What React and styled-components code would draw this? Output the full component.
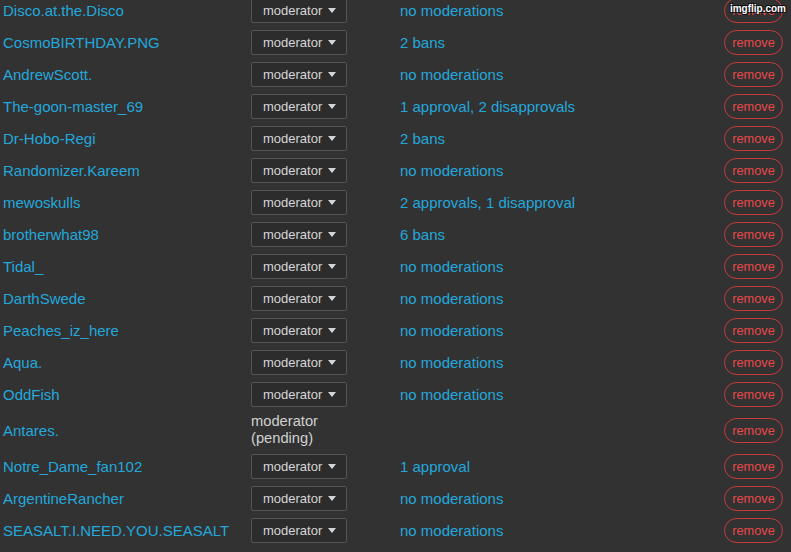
import React from "react";
import styled, { createGlobalStyle } from "styled-components";

const GlobalStyle = createGlobalStyle`
	html, body {
		margin: 0;
		padding: 0;
		background: #323232;
		overflow: hidden;
	}
	body {
		font-family: "Liberation Sans", Arial, sans-serif;
	}
`;

const Page = styled.div`
	position: relative;
	width: 791px;
	height: 552px;
	overflow: hidden;
	background: #323232;
`;

const Table = styled.div`
	margin-top: -6px;
	display: flex;
	flex-direction: column;
`;

const Row = styled.div`
	display: grid;
	grid-template-columns: 251px 149px 1fr 67px;
	align-items: center;
	height: ${(props) => (props.tall ? "40px" : "32px")};
`;

const Name = styled.a`
	padding-left: 3px;
	padding-top: 1px;
	font-size: 15px;
	color: #23a8dc;
	text-decoration: none;
	white-space: nowrap;
`;

const Select = styled.div`
	box-sizing: border-box;
	width: 96px;
	height: 25px;
	display: flex;
	align-items: center;
	padding-left: 11px;
	gap: 6px;
	border: 1px solid #555;
	border-radius: 2px;
	background: #2c2c2c;
	color: #d6d6d6;
	font-size: 13px;
`;

const Arrow = styled.span`
	width: 0;
	height: 0;
	border-left: 4px solid transparent;
	border-right: 4px solid transparent;
	border-top: 5px solid #d6d6d6;
	margin-top: 1px;
`;

const Pending = styled.div`
	font-size: 14.7px;
	line-height: 17px;
	color: #d0d0d0;
`;

const Status = styled.span`
	padding-top: 1px;
	font-size: 15px;
	color: #23a8dc;
	white-space: nowrap;
`;

const RemoveBtn = styled.button`
	box-sizing: border-box;
	width: 59px;
	height: 25px;
	padding: 0;
	border: 1px solid #c9393b;
	border-radius: 13px;
	background: transparent;
	color: #e8484a;
	font-family: "Liberation Sans", Arial, sans-serif;
	font-size: 12.8px;
	cursor: pointer;
`;

const Watermark = styled.div`
	position: absolute;
	top: 3px;
	right: 5px;
	font-family: "Liberation Sans", Arial, sans-serif;
	font-size: 10px;
	font-weight: 700;
	color: #fff;
	text-shadow: -1px -1px 0 #111, 1px -1px 0 #111, -1px 1px 0 #111, 1px 1px 0 #111;
`;

const members = [
	{ name: "Disco.at.the.Disco", status: "no moderations" },
	{ name: "CosmoBIRTHDAY.PNG", status: "2 bans" },
	{ name: "AndrewScott.", status: "no moderations" },
	{ name: "The-goon-master_69", status: "1 approval, 2 disapprovals" },
	{ name: "Dr-Hobo-Regi", status: "2 bans" },
	{ name: "Randomizer.Kareem", status: "no moderations" },
	{ name: "mewoskulls", status: "2 approvals, 1 disapproval" },
	{ name: "brotherwhat98", status: "6 bans" },
	{ name: "Tidal_", status: "no moderations" },
	{ name: "DarthSwede", status: "no moderations" },
	{ name: "Peaches_iz_here", status: "no moderations" },
	{ name: "Aqua.", status: "no moderations" },
	{ name: "OddFish", status: "no moderations" },
	{ name: "Antares.", status: "", pending: true },
	{ name: "Notre_Dame_fan102", status: "1 approval" },
	{ name: "ArgentineRancher", status: "no moderations" },
	{ name: "SEASALT.I.NEED.YOU.SEASALT", status: "no moderations" },
];

export default function App() {
	return (
		<Page>
			<GlobalStyle />
			<Table>
				{members.map((item) => (
					<Row key={item.name} tall={item.pending}>
						<Name href="#">{item.name}</Name>
						{item.pending ? (
							<Pending>
								moderator
								<br />
								(pending)
							</Pending>
						) : (
							<div>
								<Select>
									moderator
									<Arrow />
								</Select>
							</div>
						)}
						<Status>{item.status}</Status>
						<div>
							<RemoveBtn>remove</RemoveBtn>
						</div>
					</Row>
				))}
			</Table>
			<Watermark>imgflip.com</Watermark>
		</Page>
	);
}
